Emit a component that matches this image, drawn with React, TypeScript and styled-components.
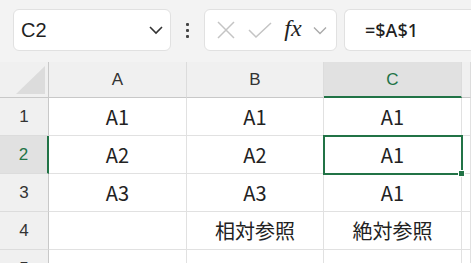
import React from 'react';
import styled, { createGlobalStyle, css } from 'styled-components';

const GlobalStyle = createGlobalStyle`
  html, body {
    margin: 0;
    padding: 0;
    background: #f3f3f3;
    overflow: hidden;
  }
  * {
    box-sizing: border-box;
  }
`;

const Page = styled.div`
  width: 471px;
  height: 263px;
  display: flex;
  flex-direction: column;
  overflow: hidden;
  font-family: 'Noto Sans CJK JP', 'Noto Sans', sans-serif;
  color: #262626;
`;

const Toolbar = styled.div`
  height: 62px;
  flex-shrink: 0;
  display: flex;
  align-items: flex-start;
  padding: 9px 0 0 13px;
  background: #f3f3f3;
`;

const Box = styled.div<{ $width: number }>`
  width: ${p => p.$width}px;
  height: 42px;
  flex-shrink: 0;
  background: #fff;
  border: 1px solid #e1e1e1;
  border-radius: 6px;
  display: flex;
  align-items: center;
`;

const NameText = styled.span`
  flex: 1;
  padding-left: 7px;
  font-family: 'Liberation Sans', Arial, sans-serif;
  font-size: 20px;
  color: #1f1f1f;
`;

const Chevron = styled.svg`
  margin-right: 6px;
`;

const Dots = styled.div`
  width: 33px;
  height: 42px;
  flex-shrink: 0;
  display: flex;
  flex-direction: column;
  align-items: center;
  justify-content: center;
  gap: 3px;
  span {
    width: 3px;
    height: 3px;
    background: #444;
    border-radius: 1px;
  }
`;

const FxButtons = styled(Box)`
  justify-content: space-around;
  padding: 0 4px 0 6px;
  margin-right: 7px;
`;

const FxLabel = styled.span`
  font-family: 'Liberation Serif', 'Times New Roman', serif;
  font-style: italic;
  font-size: 24px;
  color: #222;
  margin-top: -4px;
`;

const FormulaBox = styled(Box)`
  flex: 1;
  flex-shrink: 1;
  border-right: none;
  border-radius: 6px 0 0 6px;
  padding-left: 20px;
`;

const FormulaText = styled.span`
  font-family: 'Noto Sans', sans-serif;
  font-size: 18px;
  font-weight: 500;
  color: #1f1f1f;
`;

const Grid = styled.div`
  flex: 1;
  min-height: 0;
  display: grid;
  grid-template-columns: 49px 138px 137px 138px 1fr;
  grid-template-rows: 36px 38px 38px 38px 38px 38px;
  background: #fff;
`;

const Corner = styled.div`
  background: #f0f0f0;
  border-right: 1px solid #c8c8c8;
  border-bottom: 1px solid #c8c8c8;
  position: relative;
  svg {
    position: absolute;
    right: 3px;
    bottom: 3px;
  }
`;

const ColHead = styled.div<{ $active?: boolean }>`
  background: ${p => (p.$active ? '#e1e1e1' : '#f0f0f0')};
  border-right: 1px solid #dcdcdc;
  border-bottom: ${p => (p.$active ? '2px solid #217346' : '1px solid #c8c8c8')};
  display: flex;
  align-items: center;
  justify-content: center;
  padding-top: ${p => (p.$active ? '1px' : '0')};
  font-family: 'Liberation Sans', Arial, sans-serif;
  font-size: 17px;
  color: ${p => (p.$active ? '#217346' : '#333')};
`;

const RowHead = styled.div<{ $active?: boolean }>`
  background: ${p => (p.$active ? '#e1e1e1' : '#f0f0f0')};
  border-right: ${p => (p.$active ? '2px solid #217346' : '1px solid #c8c8c8')};
  border-bottom: 1px solid #dcdcdc;
  display: flex;
  align-items: center;
  justify-content: center;
  font-family: 'Liberation Sans', Arial, sans-serif;
  font-size: 17px;
  color: ${p => (p.$active ? '#217346' : '#333')};
`;

const Cell = styled.div<{ $selected?: boolean }>`
  border-right: 1px solid #e1e1e1;
  border-bottom: 1px solid #e1e1e1;
  display: flex;
  align-items: center;
  justify-content: center;
  font-size: 20px;
  color: #222;
  position: relative;
  ${p =>
    p.$selected &&
    css`
      outline: 2px solid #217346;
      outline-offset: -1px;
      z-index: 2;
    `}
`;

const Handle = styled.span`
  position: absolute;
  right: -4px;
  bottom: -4px;
  width: 7px;
  height: 7px;
  background: #217346;
  border: 1px solid #fff;
`;

const rows = [
  ['A1', 'A1', 'A1'],
  ['A2', 'A2', 'A1'],
  ['A3', 'A3', 'A1'],
  ['', '相対参照', '絶対参照'],
  ['', '', ''],
];

const App: React.FC = () => {
  return (
    <Page>
      <GlobalStyle />
      <Toolbar>
        <Box $width={158}>
          <NameText>C2</NameText>
          <Chevron width="16" height="10" viewBox="0 0 16 10">
            <path d="M2 2l6 6 6-6" fill="none" stroke="#333" strokeWidth="1.6" />
          </Chevron>
        </Box>
        <Dots>
          <span />
          <span />
          <span />
        </Dots>
        <FxButtons $width={133}>
          <svg width="20" height="20" viewBox="0 0 20 20">
            <path d="M2 2l16 16M18 2L2 18" stroke="#c4c4c4" strokeWidth="1.5" />
          </svg>
          <svg width="26" height="20" viewBox="0 0 26 20">
            <path d="M2 10l7 7L24 3" fill="none" stroke="#c4c4c4" strokeWidth="1.5" />
          </svg>
          <FxLabel>fx</FxLabel>
          <svg width="14" height="9" viewBox="0 0 14 9">
            <path d="M1 1.5l6 6 6-6" fill="none" stroke="#aaa" strokeWidth="1.4" />
          </svg>
        </FxButtons>
        <FormulaBox $width={0}>
          <FormulaText>=$A$1</FormulaText>
        </FormulaBox>
      </Toolbar>
      <Grid>
        <Corner>
          <svg width="29" height="28" viewBox="0 0 29 28">
            <path d="M29 0V28H0Z" fill="#dcdcdc" />
          </svg>
        </Corner>
        <ColHead>A</ColHead>
        <ColHead>B</ColHead>
        <ColHead $active>C</ColHead>
        <ColHead />
        {rows.map((r, i) => (
          <React.Fragment key={i}>
            <RowHead $active={i === 1}>{i + 1}</RowHead>
            {r.map((v, j) => (
              <Cell key={j} $selected={i === 1 && j === 2}>
                {v}
                {i === 1 && j === 2 && <Handle />}
              </Cell>
            ))}
            <Cell />
          </React.Fragment>
        ))}
      </Grid>
    </Page>
  );
};

export default App;
